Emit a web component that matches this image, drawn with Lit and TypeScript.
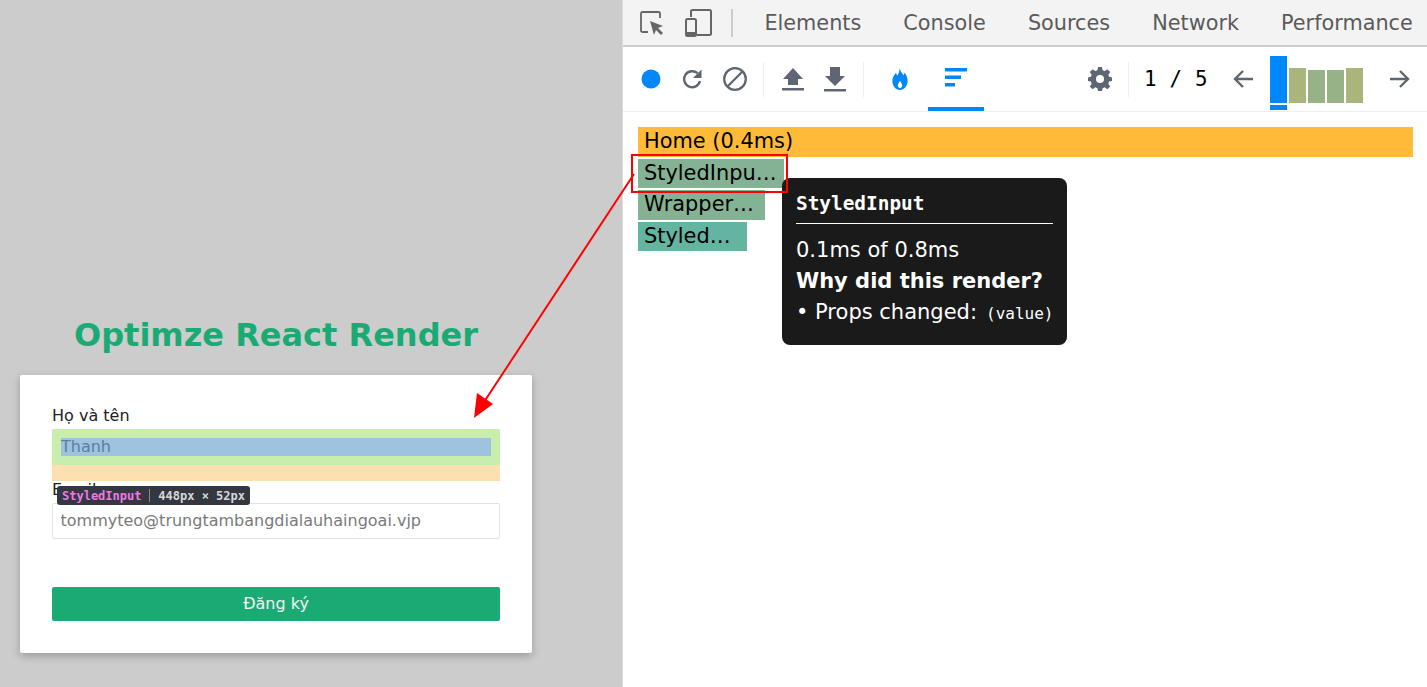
import { LitElement, html, css } from "lit";
import { customElement } from "lit/decorators.js";

@customElement("app-root")
export class AppRoot extends LitElement {
  static styles = css`
    :host { display: flex; position: relative; width: 1427px; height: 687px; overflow: hidden; font-family: "DejaVu Sans", sans-serif; background: #fff; }
    * { box-sizing: border-box; }
    .left { width: 622px; flex: none; background: #ccc; display: flex; flex-direction: column; align-items: flex-start; justify-content: flex-end; padding: 0 0 34px 20px; }
    .title { width: 512px; text-align: center; font-size: 32px; line-height: 38px; font-weight: 700; color: #1aab74; margin: 0 0 21px; }
    .card { width: 512px; height: 278px; background: #fff; border-radius: 2px; box-shadow: 0 3px 8px rgba(0,0,0,.25); padding: 31px 32px 0; }
    .label { font-size: 16px; line-height: 19px; color: #222; height: 23px; }
    .margin { background: #fedfb0; height: 52px; border-radius: 2px 2px 0 0; }
    .pad { background: #c8edad; height: 36px; padding: 9px; border-radius: 2px; }
    .content { background: #9fc3de; height: 18px; font-size: 16px; line-height: 18px; color: #5a7fa5; white-space: nowrap; }
    .email-label { line-height: 18px; height: 22px; }
    .input { height: 36px; border: 1px solid #e2e2e2; border-radius: 2px; padding: 0 7.500px; font-size: 16px; line-height: 33px; color: #7a7a7a; white-space: nowrap; }
    .submit { margin-top: 48px; height: 34px; border-radius: 2px; background: #1aab74; color: #f4f4f4; font-size: 16px; line-height: 33px; text-align: center; }
    .hl-tip { position: absolute; left: 57px; top: 486px; height: 19px; width: 193px; background: #333740; border-radius: 3px; display: flex; align-items: center; padding: 0 5px; font-family: "DejaVu Sans Mono", monospace; font-size: 12px; font-weight: 700; color: #d7d7d7; white-space: nowrap; }
    .hl-name { color: #ee78e6; }
    .hl-sep { width: 1px; height: 13px; background: #888; margin: 0 8px 0 8px; }

    .right { flex: 1; min-width: 0; border-left: 1px solid #dcdcdc; display: flex; flex-direction: column; }
    .tabs { height: 47px; flex: none; background: #f3f3f3; border-bottom: 2px solid #ccc; display: flex; align-items: center; padding-left: 17px; }
    .tabs svg { flex: none; display: block; }
    .tab-sep { width: 2px; height: 28px; background: #ccc; margin: 0 31.400px 0 19px; flex: none; }
    .tab { font-size: 20.800px; color: #5a5a5a; margin-right: 42px; white-space: nowrap; line-height: 24px; flex: none; }
    .toolbar { height: 65px; flex: none; border-bottom: 1px solid #eee; display: flex; align-items: center; position: relative; }
    .tb-sep { width: 1px; height: 35px; background: #eee; flex: none; }
    .toolbar svg { display: block; flex: none; }
    .counter { font-family: "DejaVu Sans Mono", monospace; font-size: 20.800px; color: #000; white-space: pre; width: 88px; word-spacing: 0.500px; }
    .flame-tab { width: 56px; height: 63px; display: flex; align-items: center; justify-content: center; border-bottom: 4px solid #0088fa; padding-top: 1px; flex: none; }
    .commits { width: 93px; height: 47px; display: flex; gap: 2px; align-items: flex-end; flex: none; position: relative; margin-top: 1px; }
    .commit { width: 17px; }
    .commits-under { position: absolute; left: 0; bottom: -7px; width: 17px; height: 5px; background: #0088fa; }
    .chart { flex: 1; padding: 15px 13px 0 15px; position: relative; display: flex; flex-direction: column; gap: 2px; }
    .bar { height: 29.500px; font-size: 20.900px; line-height: 28px; color: #000; padding-left: 6px; white-space: nowrap; flex: none; }
    .tip { position: absolute; left: 782px; top: 178px; width: 285px; height: 167px; border-radius: 8px; background: #1a1a1a; color: #fff; padding: 14px 14px 0; font-size: 21px; white-space: nowrap; }
    .tip-name { font-family: "DejaVu Sans Mono", monospace; font-weight: 700; font-size: 19.400px; line-height: 24px; height: 32px; border-bottom: 1px solid #fff; width: 257px; margin-bottom: 11px; }
    .tip-line { line-height: 31px; height: 31px; }
    .tip-b { font-weight: 700; }
    .tip-mono { font-family: "DejaVu Sans Mono", monospace; font-size: 16px; margin-left: 9px; }
    .ann { position: absolute; left: 0; top: 0; pointer-events: none; }
  `;

  render() {
    const g = "#5f6673";
    return html`
      <div class="left">
        <h1 class="title">Optimze React Render</h1>
        <div class="card">
          <div class="label">Họ và tên</div>
          <div class="margin"><div class="pad"><div class="content">Thanh</div></div></div>
          <div class="label email-label">Email</div>
          <div class="input">tommyteo@trungtambangdialauhaingoai.vjp</div>
          <div class="submit">Đăng ký</div>
        </div>
      </div>

      <div class="right">
        <div class="tabs">
          <svg width="24" height="24" viewBox="0 0 24 24" fill="none">
            <path d="M8 21H2.500A1.500 1.500 0 0 1 1 19.500V2.500A1.500 1.500 0 0 1 2.500 1h16A1.500 1.500 0 0 1 20 2.500V7" stroke="#666" stroke-width="1.800"/>
            <path d="M10 10l13 5-5 2 5 5-2 2-5-5-2 5z" fill="#666"/>
          </svg>
          <svg style="margin-left:21px" width="27" height="28" viewBox="0 0 27 28" fill="none">
            <path d="M6 8V2.500A1.500 1.500 0 0 1 7.500 1h17A1.500 1.500 0 0 1 26 2.500v22a1.500 1.500 0 0 1-1.500 1.500H12" stroke="#666" stroke-width="2"/>
            <rect x="1" y="10" width="10" height="17" rx="1.500" stroke="#666" stroke-width="2"/>
            <rect x="1" y="23" width="10" height="4" fill="#666"/>
          </svg>
          <div class="tab-sep"></div>
          <div class="tab">Elements</div>
          <div class="tab">Console</div>
          <div class="tab">Sources</div>
          <div class="tab">Network</div>
          <div class="tab">Performance</div>
        </div>

        <div class="toolbar">
          <svg style="margin-left:18px" width="20" height="20" viewBox="0 0 20 20"><circle cx="10" cy="10" r="9.500" fill="#0088fa"/></svg>
          <svg style="margin-left:21px" width="20" height="20" viewBox="0 0 20 20" fill="none"><path d="M15.500 4.200A8 8 0 1 0 18 12" stroke="${g}" stroke-width="2.400"/><path d="M19.500 0.500V9H11z" fill="${g}"/></svg>
          <svg style="margin-left:21px" width="24" height="24" viewBox="0 0 24 24" fill="none"><circle cx="12" cy="12" r="10.800" stroke="${g}" stroke-width="2.300"/><path d="M5 19L19 5" stroke="${g}" stroke-width="2.300"/></svg>
          <div class="tb-sep" style="margin-left:16px"></div>
          <svg style="margin-left:18px" width="22" height="23" viewBox="0 0 22 23"><path d="M11 0L21 11H16V17H6V11H1zM0 20H22V22.500H0z" fill="${g}"/></svg>
          <svg style="margin-left:20px" width="22" height="25" viewBox="0 0 22 25"><path d="M6 0H16V9H21L11 19 1 9H6zM0 22H22V24.500H0z" fill="${g}"/></svg>
          <div class="tb-sep" style="margin-left:17px"></div>
          <svg style="margin-left:28px" width="16" height="22" viewBox="0 0 20 24" preserveAspectRatio="none"><path d="M9.500 0c1 4 3 5.500 5 8 .6-.8 1-1.800 1-3 2.500 2.500 4 5.500 4 9 0 5.500-4 10-9.500 10S.5 19.500.5 14.500C.5 9.500 3 8 5 5c.5 1.500.8 2.500 1.500 3.500C8.500 6 9.500 3.500 9.500 0z" fill="#0088fa"/><path d="M10 14c.8 1.500 2.700 3 2.700 5.200 0 1.600-1.200 2.800-2.700 2.800s-2.700-1.200-2.700-2.800C7.300 17 9.200 15.500 10 14z" fill="#fff"/></svg>
          <div class="flame-tab" style="margin-left:20px">
            <svg width="22" height="19" viewBox="0 0 22 19"><path d="M0 0H22V3.500H0zM0 7.500H16V11H0zM0 15H10V18.500H0z" fill="#0088fa"/></svg>
          </div>
          <svg style="margin-left:104px" width="24" height="24" viewBox="0 0 24 24"><path fill="${g}" fill-rule="evenodd" d="M10 0h4l.6 3.200 2.100.9L19.400 2.200l2.800 2.800-1.900 2.700.9 2.100L24 10.400v3.600l-2.800.6-.9 2.100 1.900 2.700-2.800 2.800-2.700-1.900-2.100.9L14 24h-4l-.6-2.800-2.100-.9-2.700 1.900-2.800-2.800 1.900-2.700-.9-2.100L0 14v-3.600l2.800-.6.900-2.100L1.800 5l2.800-2.800 2.700 1.900 2.100-.9zM12 8a4 4 0 1 0 0 8 4 4 0 0 0 0-8z"/></svg>
          <div class="tb-sep" style="margin-left:16px"></div>
          <div class="counter" style="margin-left:15px">1 / 5</div>
          <svg style="margin-left:1px" width="20" height="20" viewBox="0 0 20 20" fill="none"><path d="M20 10H2M10 2l-8 8 8 8" stroke="${g}" stroke-width="2.400"/></svg>
          <div class="commits" style="margin-left:17px">
            <div class="commit" style="height:47px;background:#0088fa"></div>
            <div class="commit" style="height:35px;background:#aab57b"></div>
            <div class="commit" style="height:33px;background:#96b286"></div>
            <div class="commit" style="height:33px;background:#96b286"></div>
            <div class="commit" style="height:35px;background:#aab57b"></div>
            <div class="commits-under"></div>
          </div>
          <svg style="margin-left:27px" width="20" height="20" viewBox="0 0 20 20" fill="none"><path d="M0 10H18M10 2l8 8-8 8" stroke="${g}" stroke-width="2.400"/></svg>
        </div>

        <div class="chart">
          <div class="bar" style="width:775px;background:#ffbb38">Home (0.4ms)</div>
          <div class="bar" style="width:146px;background:#83b394">StyledInpu…</div>
          <div class="bar" style="width:127px;background:#83b394">Wrapper…</div>
          <div class="bar" style="width:109px;background:#64b4a2">Styled…</div>
        </div>
      </div>

      <div class="hl-tip"><span class="hl-name">StyledInput</span><span class="hl-sep"></span><span>448px × 52px</span></div>

      <div class="tip">
        <div class="tip-name">StyledInput</div>
        <div class="tip-line">0.1ms of 0.8ms</div>
        <div class="tip-line tip-b">Why did this render?</div>
        <div class="tip-line">• Props changed:<span class="tip-mono">(value)</span></div>
      </div>

      <svg class="ann" width="1427" height="687" viewBox="0 0 1427 687" fill="none">
        <rect x="632" y="155" width="155" height="37" stroke="#f00" stroke-width="2"/>
        <path d="M634 174L484 402" stroke="#f00" stroke-width="2"/>
        <path d="M474 418L477 393 493 404z" fill="#f00"/>
      </svg>
    `;
  }
}
